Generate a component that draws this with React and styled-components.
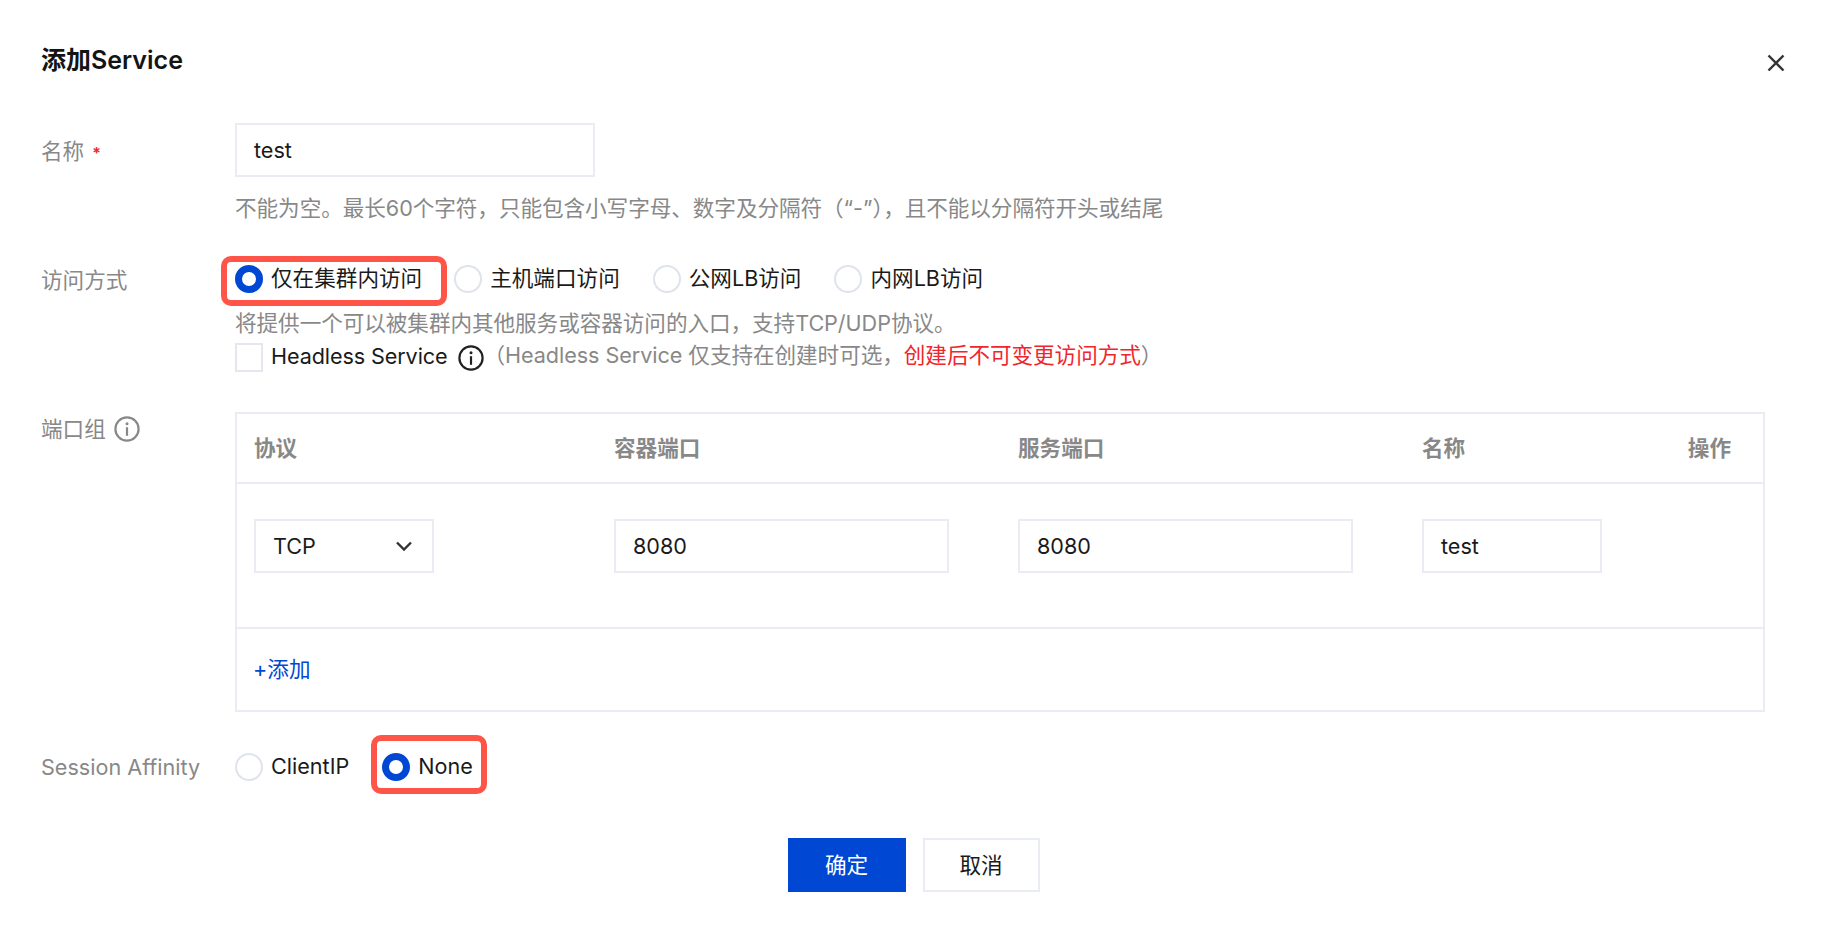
import React from "react";
import styled, { createGlobalStyle } from "styled-components";

const Global = createGlobalStyle`
  * { box-sizing: border-box; }
  html, body { margin: 0; background: #fff; }
  body {
    font-family: Inter, "Noto Sans CJK SC", sans-serif;
    font-size: 21.6px;
    color: #1a1a1a;
  }
`;

const Dialog = styled.div`
  position: relative;
  width: 1832px;
  height: 930px;
  padding: 42px 67px 0 41px;
`;

const Title = styled.h2`
  margin: 0 0 45px;
  font-size: 25px;
  font-weight: 600;
  line-height: 36px;
  color: #141414;
`;

const CloseBtn = styled.button`
  position: absolute;
  top: 52px;
  right: 45px;
  width: 22px;
  height: 22px;
  padding: 0;
  border: 0;
  background: none;
  color: #333;
`;

const Row = styled.div`
  display: grid;
  grid-template-columns: 194px 1fr;
  margin-top: ${(p) => p.$top || 0}px;
`;

const Label = styled.div`
  display: flex;
  align-items: center;
  gap: 8px;
  height: ${(p) => p.$height || 40}px;
  margin-top: ${(p) => p.$top || 0}px;
  color: #888;
  line-height: 40px;
`;

const Required = styled.span`
  color: #f0262d;
  font-size: 16px;
  font-weight: 600;
  padding-top: 4px;
`;

const Field = styled.div`
  display: flex;
  align-items: center;
  justify-content: space-between;
  width: ${(p) => p.$width}px;
  height: 54px;
  padding: 0 19px 0 17px;
  border: 2px solid #e9ecf2;
  background: #fff;
  line-height: 50px;
`;

const Help = styled.div`
  margin-top: ${(p) => p.$top || 0}px;
  padding-bottom: ${(p) => p.$lift || 0}px;
  color: #888;
  line-height: 32px;
  letter-spacing: -0.05px;
`;

const Danger = styled.span`
  color: #f0262d;
`;

const RadioGroup = styled.div`
  display: flex;
  height: 40px;
  align-items: center;
`;

const Option = styled.label`
  position: relative;
  display: flex;
  align-items: center;
  gap: 8px;
  margin-right: ${(p) => p.$gap}px;
  line-height: 40px;

  ${(p) =>
    p.$mark &&
    `&::after {
      content: "";
      position: absolute;
      top: ${p.$mark[0]}px;
      right: ${p.$mark[1]}px;
      bottom: ${p.$mark[2]}px;
      left: ${p.$mark[3]}px;
      border: 6px solid #ff5549;
      border-radius: 10px;
    }`}
`;

const Dot = styled.span`
  flex: none;
  width: 28px;
  height: 28px;
  margin-top: 2px;
  border-radius: 50%;
  border: ${(p) => (p.$on ? "7px solid #0048d4" : "2px solid #dfe3ec")};
  background: #fff;
`;

const CheckLine = styled.div`
  display: flex;
  align-items: center;
  height: 29px;
  margin-top: 4px;
`;

const CheckText = styled.span`
  padding-bottom: 3px;
  letter-spacing: -0.1px;
`;

const Box = styled.span`
  flex: none;
  width: 28px;
  height: 29px;
  margin-right: 8px;
  border: 2px solid #e4e7ee;
`;

const InfoIcon = styled.svg`
  flex: none;
  width: ${(p) => p.$size}px;
  height: ${(p) => p.$size}px;
  margin-left: ${(p) => p.$left || 0}px;
  color: ${(p) => p.$color};
`;

const PortTable = styled.div`
  height: 300px;
  border: 2px solid #e9ecf2;
`;

const Cols = styled.div`
  display: grid;
  grid-template-columns: 360px 404px 404px 1fr auto;
  padding: ${(p) => p.$pad || 0}px 32px 0 17px;
  align-items: ${(p) => (p.$pad ? "start" : "center")};
  height: ${(p) => p.$height}px;
  border-bottom: 2px solid #e9ecf2;
`;

const Head = styled.div`
  font-weight: 600;
  color: #888;
  line-height: 32px;
`;

const AddLink = styled.a`
  display: block;
  padding-left: 16px;
  color: #0048d4;
  line-height: 80px;
`;

const Actions = styled.div`
  display: flex;
  justify-content: center;
  gap: 17px;
  margin-top: 51px;
  padding-left: 21px;
`;

const Button = styled.button`
  width: ${(p) => p.$width}px;
  height: 54px;
  padding: 0 0 4px;
  font: inherit;
  color: ${(p) => (p.$primary ? "#fff" : "#1a1a1a")};
  background: ${(p) => (p.$primary ? "#0048d4" : "#fff")};
  border: ${(p) => (p.$primary ? "0" : "2px solid #e9ecf2")};
`;

function Info({ size, color, left }) {
  return (
    <InfoIcon $size={size} $color={color} $left={left} viewBox="0 0 26 26" fill="none">
      <circle cx="13" cy="13" r="11.6" stroke="currentColor" strokeWidth="2.2" />
      <circle cx="13" cy="7.8" r="1.5" fill="currentColor" />
      <path d="M13 11.2v8.6" stroke="currentColor" strokeWidth="2.2" />
    </InfoIcon>
  );
}

export default function App() {
  return (
    <Dialog>
      <Global />
      <Title>添加Service</Title>
      <CloseBtn aria-label="关闭">
        <svg width="22" height="22" viewBox="0 0 22 22" fill="none" stroke="currentColor" strokeWidth="2.4">
          <path d="M3.5 3.5l15 15M18.5 3.5l-15 15" />
        </svg>
      </CloseBtn>

      <Row>
        <Label $height={54} $top={1}>
          名称 <Required>*</Required>
        </Label>
        <div>
          <Field $width={360}>test</Field>
          <Help $top={15}>不能为空。最长60个字符，只能包含小写字母、数字及分隔符（“-”），且不能以分隔符开头或结尾</Help>
        </div>
      </Row>

      <Row $top={34}>
        <Label $top={2}>访问方式</Label>
        <div>
          <RadioGroup>
            <Option $gap={32} $mark={[-2, -25, -8, -14]}>
              <Dot $on />
              仅在集群内访问
            </Option>
            <Option $gap={33}>
              <Dot />
              主机端口访问
            </Option>
            <Option $gap={33}>
              <Dot />
              公网LB访问
            </Option>
            <Option $gap={0}>
              <Dot />
              内网LB访问
            </Option>
          </RadioGroup>
          <Help $top={9}>将提供一个可以被集群内其他服务或容器访问的入口，支持TCP/UDP协议。</Help>
          <CheckLine>
            <Box />
            <CheckText>Headless Service</CheckText>
            <Info size={26} color="#222" left={10} />
            <Help $lift={5}>
              （Headless Service 仅支持在创建时可选，<Danger>创建后不可变更访问方式</Danger>）
            </Help>
          </CheckLine>
        </div>
      </Row>

      <Row $top={40}>
        <Label $height={34}>
          端口组
          <Info size={26} color="#888" />
        </Label>
        <PortTable>
          <Cols $height={70}>
            <Head>协议</Head>
            <Head>容器端口</Head>
            <Head>服务端口</Head>
            <Head>名称</Head>
            <Head>操作</Head>
          </Cols>
          <Cols $height={145} $pad={35}>
            <Field $width={180}>
              TCP
              <svg width="18" height="12" viewBox="0 0 18 12" fill="none" stroke="#333" strokeWidth="2.4">
                <path d="M2 2.5l7 7 7-7" />
              </svg>
            </Field>
            <Field $width={335}>8080</Field>
            <Field $width={335}>8080</Field>
            <Field $width={180}>test</Field>
            <span />
          </Cols>
          <AddLink>+添加</AddLink>
        </PortTable>
      </Row>

      <Row $top={34}>
        <Label $top={1}>Session Affinity</Label>
        <RadioGroup>
          <Option $gap={33}>
            <Dot />
            ClientIP
          </Option>
          <Option $gap={0} $mark={[-11, -14, -8, -11]}>
            <Dot $on />
            None
          </Option>
        </RadioGroup>
      </Row>

      <Actions>
        <Button $primary $width={118}>确定</Button>
        <Button $width={117}>取消</Button>
      </Actions>
    </Dialog>
  );
}
